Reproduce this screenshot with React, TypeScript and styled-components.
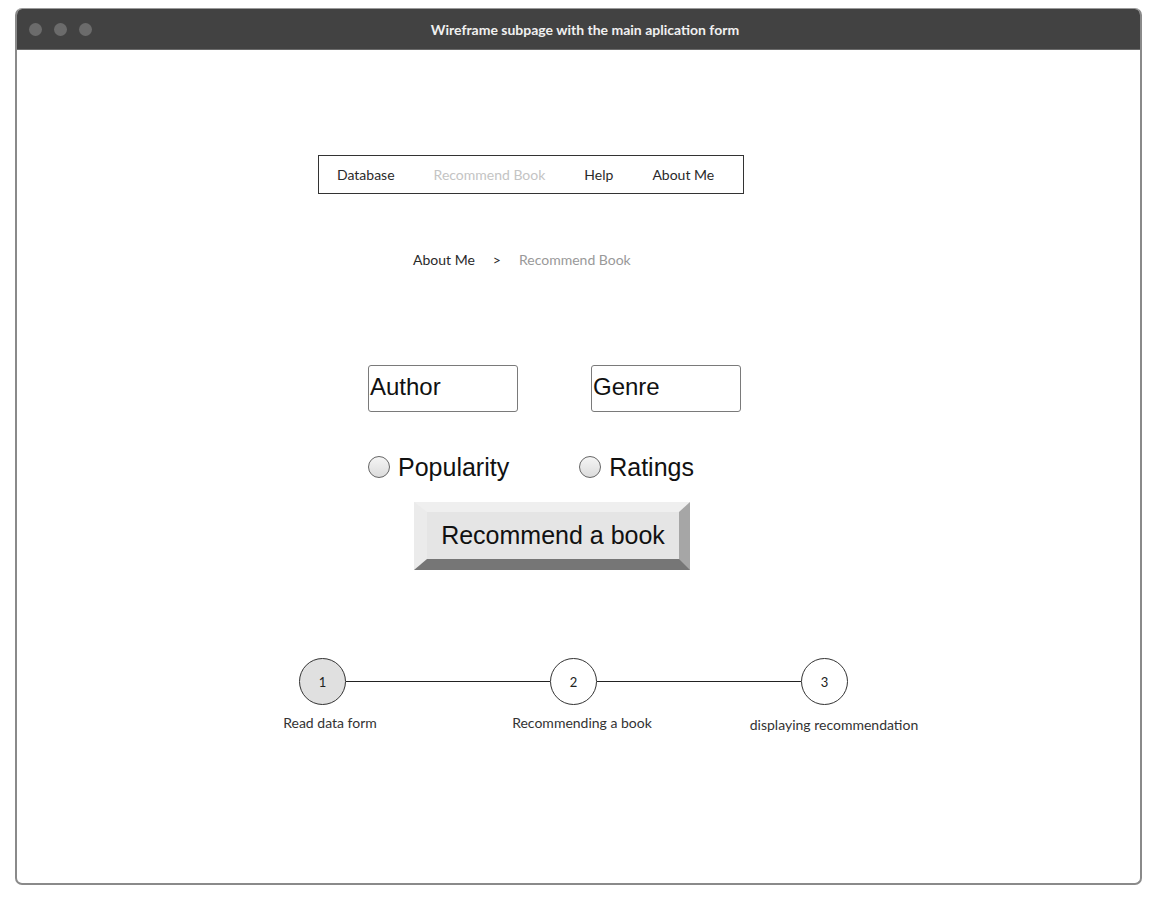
import React from "react";
import styled, { createGlobalStyle } from "styled-components";

const Global = createGlobalStyle`
  html, body { margin: 0; padding: 0; background: #ffffff; }
  body { font-family: "Lato", "Liberation Sans", sans-serif; }
`;

const Page = styled.div`
  padding: 8px 0 0 15px;
  width: 1167px;
  height: 904px;
  box-sizing: border-box;
`;

const Window = styled.div`
  width: 1127px;
  height: 877px;
  box-sizing: border-box;
  border: 2px solid #8a8a8a;
  border-top: 1px solid #9a9a9a;
  border-radius: 7px;
  overflow: hidden;
  display: flex;
  flex-direction: column;
  background: #fff;
`;

const TitleBar = styled.div`
  height: 40px;
  flex: 0 0 40px;
  background: #424242;
  border-bottom: 1px solid #6a6a6a;
  display: flex;
  align-items: center;
  padding-left: 12px;
`;

const Dots = styled.div`
  display: flex;
  gap: 12px;
`;

const Dot = styled.span`
  width: 13px;
  height: 13px;
  border-radius: 50%;
  background: #6b6b6b;
`;

const Title = styled.div`
  flex: 1;
  text-align: center;
  padding-right: 62px;
  color: #f0f0f0;
  font-family: "Lato", "Liberation Sans", sans-serif;
  font-weight: 700;
  font-size: 14px;
`;

const Content = styled.div`
  flex: 1;
  display: flex;
  flex-direction: column;
  align-items: flex-start;
`;

const Nav = styled.nav`
  margin: 105px 0 0 301px;
  width: 426px;
  height: 39px;
  box-sizing: border-box;
  border: 1.5px solid #333;
  display: flex;
  align-items: center;
  gap: 39px;
  padding-left: 18px;
  font-size: 14px;
`;

const NavItem = styled.span<{ $active?: boolean }>`
  color: ${(p) => (p.$active ? "#c4c4c4" : "#2a2a2a")};
`;

const Crumbs = styled.div`
  margin: 56px 0 0 396px;
  display: flex;
  gap: 18px;
  font-size: 14px;
  line-height: 20px;
`;

const Crumb = styled.span<{ $muted?: boolean }>`
  color: ${(p) => (p.$muted ? "#999" : "#2a2a2a")};
`;

const FieldRow = styled.div`
  margin: 95px 0 0 351px;
  display: flex;
  gap: 73px;
`;

const Field = styled.div`
  width: 150px;
  height: 47px;
  box-sizing: border-box;
  border: 1px solid #7a7a7a;
  border-radius: 3px;
  display: flex;
  align-items: center;
  padding: 0 0 3px 1px;
  font-family: "Liberation Sans", Arial, sans-serif;
  font-size: 24px;
  color: #111;
`;

const RadioRow = styled.div`
  margin: 41px 0 0 351px;
  display: flex;
  gap: 70px;
  height: 28px;
`;

const RadioOption = styled.label`
  display: flex;
  align-items: center;
  gap: 8px;
  font-family: "Liberation Sans", Arial, sans-serif;
  font-size: 25px;
  color: #111;
`;

const RadioCircle = styled.span`
  width: 22px;
  height: 22px;
  box-sizing: border-box;
  border-radius: 50%;
  border: 1px solid #666;
  background: linear-gradient(180deg, #f5f5f5 0%, #dcdcdc 100%);
`;

const BevelButton = styled.button`
  margin: 21px 0 0 397px;
  width: 276px;
  height: 68px;
  box-sizing: border-box;
  border-style: solid;
  border-width: 10px 11px 11px 13px;
  border-color: #efefef #a6a6a6 #767676 #ebebeb;
  background: #e5e5e5;
  padding: 0 0 1px 0;
  font-family: "Liberation Sans", Arial, sans-serif;
  font-size: 25px;
  color: #111;
  display: flex;
  align-items: center;
  justify-content: center;
`;

const Steps = styled.div`
  margin: 88px 0 0 282px;
  display: flex;
  align-items: center;
`;

const StepCircle = styled.div<{ $done?: boolean }>`
  width: 47px;
  height: 47px;
  box-sizing: border-box;
  border-radius: 50%;
  border: 1.5px solid #333;
  background: ${(p) => (p.$done ? "#e0e0e0" : "#fff")};
  display: flex;
  align-items: center;
  justify-content: center;
  font-size: 13px;
  color: #222;
`;

const StepLine = styled.div`
  width: 204px;
  height: 1.5px;
  background: #222;
`;

const StepLabels = styled.div`
  margin: 9px 0 0 187px;
  display: flex;
  font-size: 14px;
  color: #333;
`;

const StepLabel = styled.span<{ $top?: number }>`
  width: 252px;
  text-align: center;
  margin-top: ${(p) => p.$top ?? 0}px;
`;

export default function App() {
  return (
    <>
      <Global />
      <Page>
        <Window>
          <TitleBar>
            <Dots>
              <Dot />
              <Dot />
              <Dot />
            </Dots>
            <Title>Wireframe subpage with the main aplication form</Title>
          </TitleBar>
          <Content>
            <Nav>
              <NavItem>Database</NavItem>
              <NavItem $active>Recommend Book</NavItem>
              <NavItem>Help</NavItem>
              <NavItem>About Me</NavItem>
            </Nav>
            <Crumbs>
              <Crumb>About Me</Crumb>
              <Crumb>&gt;</Crumb>
              <Crumb $muted>Recommend Book</Crumb>
            </Crumbs>
            <FieldRow>
              <Field>Author</Field>
              <Field>Genre</Field>
            </FieldRow>
            <RadioRow>
              <RadioOption>
                <RadioCircle />
                Popularity
              </RadioOption>
              <RadioOption>
                <RadioCircle />
                Ratings
              </RadioOption>
            </RadioRow>
            <BevelButton>Recommend a book</BevelButton>
            <Steps>
              <StepCircle $done>1</StepCircle>
              <StepLine />
              <StepCircle>2</StepCircle>
              <StepLine />
              <StepCircle>3</StepCircle>
            </Steps>
            <StepLabels>
              <StepLabel>Read data form</StepLabel>
              <StepLabel>Recommending a book</StepLabel>
              <StepLabel $top={2}>displaying recommendation</StepLabel>
            </StepLabels>
          </Content>
        </Window>
      </Page>
    </>
  );
}
